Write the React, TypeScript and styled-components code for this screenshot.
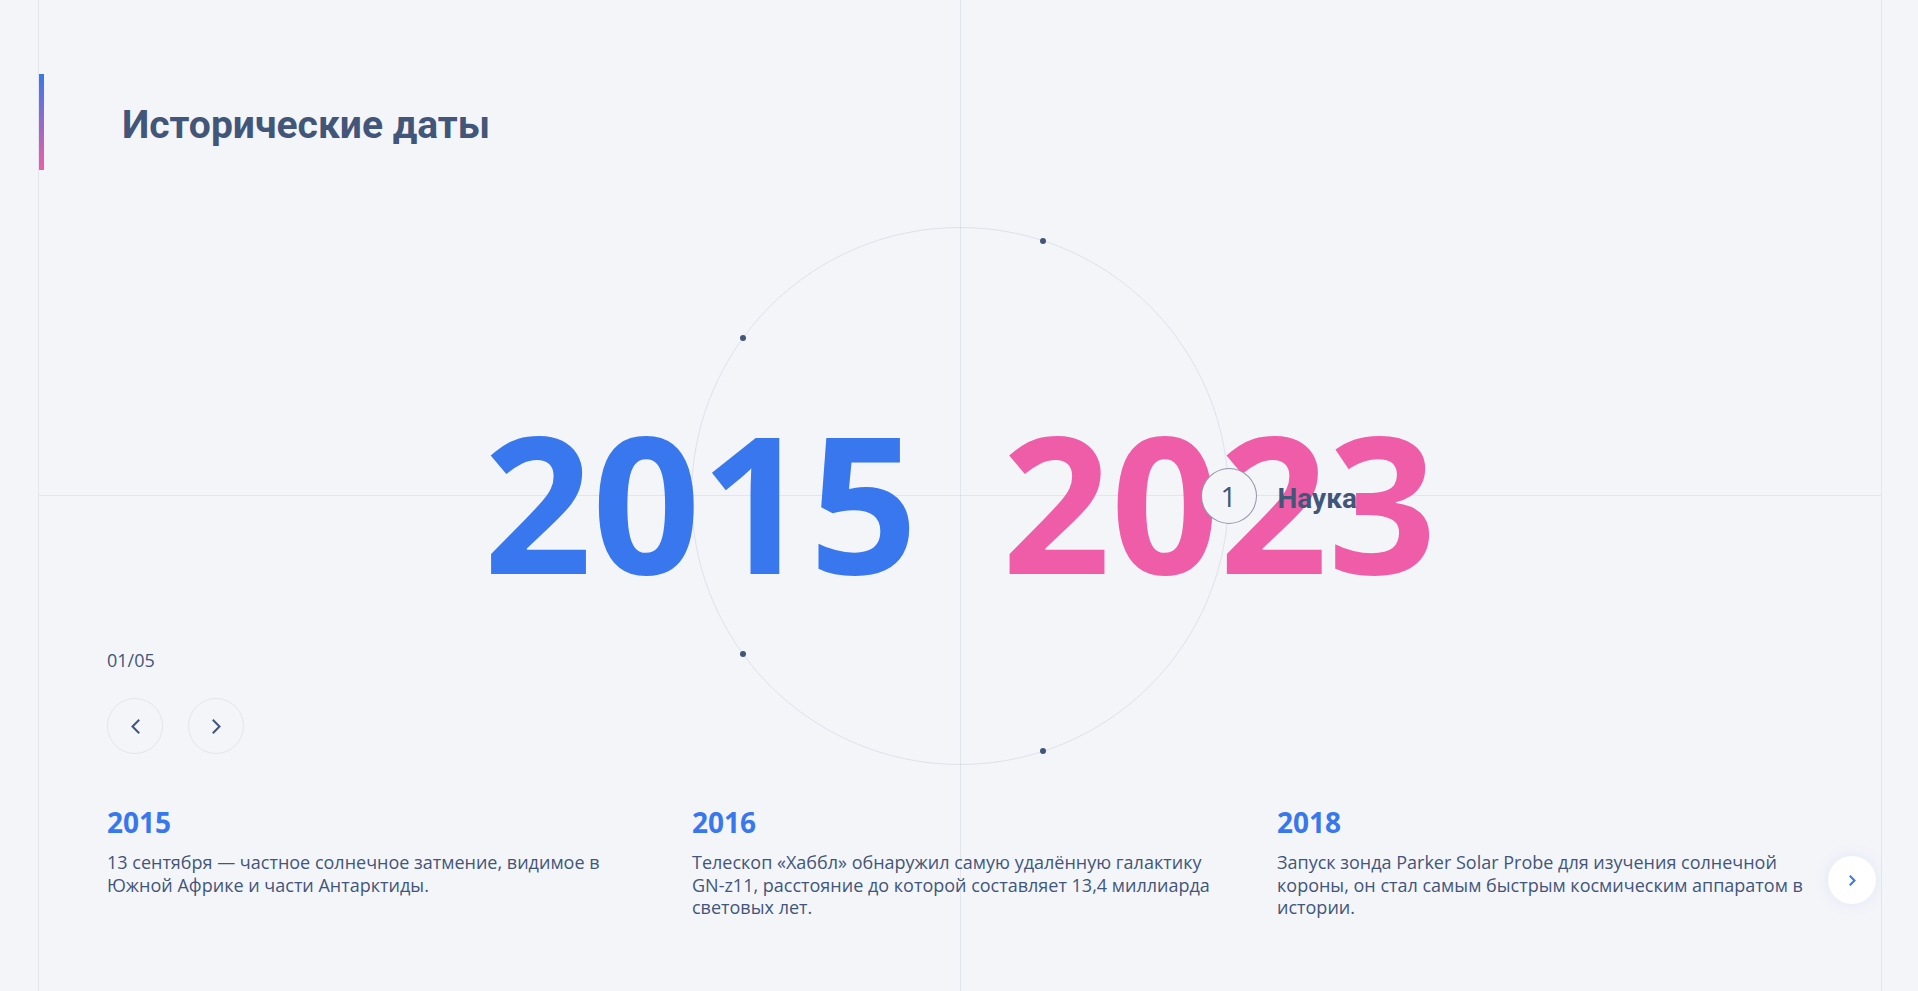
import React from "react";
import styled, { createGlobalStyle } from "styled-components";

const GlobalStyle = createGlobalStyle`
  html, body {
    margin: 0;
    padding: 0;
    background: #f4f5f9;
  }
  body {
    font-family: "Open Sans", "Noto Sans", sans-serif;
    color: #42567a;
  }
  *, *::before, *::after { box-sizing: border-box; }
`;

const LINE = "rgba(66, 86, 122, 0.1)";
const HEADING_FONT = `Roboto, "Open Sans", sans-serif`;

const Page = styled.main`
  position: relative;
  width: 1844px;
  min-height: 100vh;
  margin-left: 38px;
  padding-top: 74px;
  border-left: 1px solid ${LINE};
  border-right: 1px solid ${LINE};
  overflow: hidden;

  &::before {
    content: "";
    position: absolute;
    top: 0;
    bottom: 0;
    left: 50%;
    width: 1px;
    background: ${LINE};
  }
  &::after {
    content: "";
    position: absolute;
    left: 0;
    right: 0;
    top: 495px;
    height: 1px;
    background: ${LINE};
  }
`;

const Header = styled.header`
  display: flex;
  align-items: center;
  height: 96px;
`;

const Bar = styled.span`
  align-self: stretch;
  width: 5px;
  background: linear-gradient(180deg, #3877ee 0%, #ef5da8 100%);
`;

const Title = styled.h1`
  margin: 6px 0 0 78px;
  font-family: ${HEADING_FONT};
  font-size: 39px;
  line-height: 48px;
  font-weight: 700;
  color: #42567a;
`;

const Circle = styled.div`
  position: absolute;
  top: 227px;
  left: calc(50% - 269px);
  width: 538px;
  height: 538px;
  border-radius: 50%;
  border: 1px solid rgba(66, 86, 122, 0.12);
`;

const Dot = styled.span`
  position: absolute;
  width: 6px;
  height: 6px;
  margin: -3px 0 0 -3px;
  border-radius: 50%;
  background: #42567a;
`;

const ActivePoint = styled.div`
  position: absolute;
  z-index: 2;
  width: 56px;
  height: 56px;
  margin: -28px 0 0 -28px;
  border-radius: 50%;
  border: 1px solid rgba(48, 62, 88, 0.5);
  background: #f4f5f9;
  display: flex;
  align-items: center;
  justify-content: center;
  font-size: 28px;
  font-weight: 400;
  color: #42567a;
`;

const PointLabel = styled.span`
  position: absolute;
  left: calc(100% + 22px);
  top: calc(50% + 2px);
  transform: translateY(-50%);
  font-family: ${HEADING_FONT};
  font-size: 28px;
  font-weight: 700;
  white-space: nowrap;
  color: #42567a;
`;

const Years = styled.div`
  position: relative;
  z-index: 1;
  display: flex;
  justify-content: center;
  gap: 84px;
  margin-top: 236px;
  font-size: 190px;
  line-height: 190px;
  font-weight: 700;
`;

const Year = styled.span<{ $color: string }>`
  color: ${(p) => p.$color};
`;

const Nav = styled.div`
  position: relative;
  z-index: 1;
  padding-left: 68px;
  margin-top: 53px;
`;

const Counter = styled.div`
  font-size: 18px;
  line-height: 22px;
  color: #42567a;
`;

const NavButtons = styled.div`
  display: flex;
  gap: 25px;
  margin-top: 27px;
`;

const RoundButton = styled.button`
  width: 56px;
  height: 56px;
  padding: 0;
  border-radius: 50%;
  border: 1px solid rgba(66, 86, 122, 0.1);
  background: transparent;
  display: flex;
  align-items: center;
  justify-content: center;
  cursor: pointer;
`;

const SliderRow = styled.div`
  position: relative;
  z-index: 1;
  display: flex;
  align-items: flex-start;
  gap: 6px;
  margin-top: 51px;
  padding: 0 5px 0 68px;
`;

const Track = styled.div`
  flex: 1;
  min-width: 0;
  display: flex;
  gap: 40px;
`;

const Slide = styled.article`
  flex: 0 0 545px;
`;

const SlideYear = styled.h3`
  margin: 0;
  font-size: 28px;
  line-height: 34px;
  font-weight: 700;
  color: #3877ee;
`;

const SlideText = styled.p`
  margin: 12px 0 0;
  font-size: 18px;
  line-height: 22.5px;
  color: #42567a;
`;

const NextButton = styled.button`
  flex: 0 0 48px;
  width: 48px;
  height: 48px;
  margin-top: 51px;
  padding: 0;
  border: none;
  border-radius: 50%;
  background: #fff;
  box-shadow: 0 0 15px rgba(56, 119, 238, 0.1);
  display: flex;
  align-items: center;
  justify-content: center;
  cursor: pointer;
`;

const Chevron = ({ dir, color, w, h }: { dir: "left" | "right"; color: string; w: number; h: number }) => (
  <svg width={w} height={h} viewBox={`0 0 ${w} ${h}`} fill="none">
    <polyline
      points={
        dir === "left"
          ? `${w - 1.5},1.5 1.5,${h / 2} ${w - 1.5},${h - 1.5}`
          : `1.5,1.5 ${w - 1.5},${h / 2} 1.5,${h - 1.5}`
      }
      stroke={color}
      strokeWidth={2}
      strokeLinecap="square"
      strokeLinejoin="miter"
    />
  </svg>
);

const RADIUS = 268.5;
const dots = [72, 144, 216, 288];

const events = [
  {
    year: "2015",
    text: "13 сентября — частное солнечное затмение, видимое в Южной Африке и части Антарктиды.",
  },
  {
    year: "2016",
    text: "Телескоп «Хаббл» обнаружил самую удалённую галактику GN-z11, расстояние до которой составляет 13,4 миллиарда световых лет.",
  },
  {
    year: "2018",
    text: "Запуск зонда Parker Solar Probe для изучения солнечной короны, он стал самым быстрым космическим аппаратом в истории.",
  },
];

const pos = (deg: number) => {
  const r = (deg * Math.PI) / 180;
  return { left: 268 + RADIUS * Math.cos(r), top: 268 + RADIUS * Math.sin(r) };
};

export default function App() {
  return (
    <>
      <GlobalStyle />
      <Page>
        <Circle>
          {dots.map((d) => (
            <Dot key={d} style={pos(d)} />
          ))}
          <ActivePoint style={pos(0)}>
            1<PointLabel>Наука</PointLabel>
          </ActivePoint>
        </Circle>

        <Header>
          <Bar />
          <Title>Исторические даты</Title>
        </Header>

        <Years>
          <Year $color="#3877ee">2015</Year>
          <Year $color="#ef5da8">2023</Year>
        </Years>

        <Nav>
          <Counter>01/05</Counter>
          <NavButtons>
            <RoundButton aria-label="Назад">
              <Chevron dir="left" color="#42567a" w={9} h={15} />
            </RoundButton>
            <RoundButton aria-label="Вперёд">
              <Chevron dir="right" color="#42567a" w={9} h={15} />
            </RoundButton>
          </NavButtons>
        </Nav>

        <SliderRow>
          <Track>
            {events.map((e) => (
              <Slide key={e.year}>
                <SlideYear>{e.year}</SlideYear>
                <SlideText>{e.text}</SlideText>
              </Slide>
            ))}
          </Track>
          <NextButton aria-label="Следующее событие">
            <Chevron dir="right" color="#3877ee" w={7} h={11} />
          </NextButton>
        </SliderRow>
      </Page>
    </>
  );
}
